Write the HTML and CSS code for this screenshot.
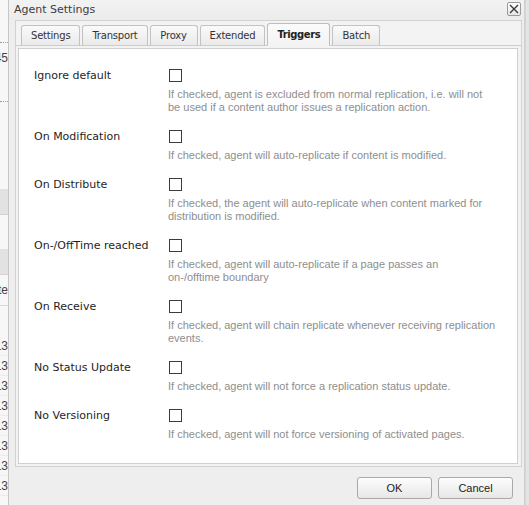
FILE: index.html
```html
<!DOCTYPE html>
<html>

<head>
    <title>Agent Settings</title>
    <link rel="stylesheet" href="styles.css">
</head>

<body>
    <div class="screen">
        <!-- the page underneath the dialog, only its right edge shows -->
        <div class="behind">
            <div class="behind-top"></div>
            <div class="behind-row dotted"><span>1945</span></div>
            <div class="behind-row"></div>
            <div class="behind-row dotted"></div>
            <div class="behind-gap"></div>
            <div class="behind-band"></div>
            <div class="behind-gap small"></div>
            <div class="behind-band"></div>
            <div class="behind-head"><span>Date</span></div>
            <div class="behind-gap tiny"></div>
            <div class="behind-cell"><span>13</span></div>
            <div class="behind-cell"><span>13</span></div>
            <div class="behind-cell"><span>13</span></div>
            <div class="behind-cell"><span>13</span></div>
            <div class="behind-cell"><span>13</span></div>
            <div class="behind-cell"><span>13</span></div>
            <div class="behind-cell"><span>13</span></div>
            <div class="behind-cell"><span>13</span></div>
        </div>

        <div class="window">
            <div class="titlebar">
                <span class="title">Agent Settings</span>
                <button class="close" type="button">
                    <svg width="10" height="10" viewBox="0 0 10 10">
                        <path d="M1 1L9 9M9 1L1 9" stroke="#3a3a3a" stroke-width="1.4" />
                    </svg>
                </button>
            </div>

            <div class="tabpanel">
                <ul class="tabs">
                    <li class="tab">Settings</li>
                    <li class="tab">Transport</li>
                    <li class="tab">Proxy</li>
                    <li class="tab">Extended</li>
                    <li class="tab active">Triggers</li>
                    <li class="tab">Batch</li>
                </ul>

                <div class="tab-body">
                    <div class="field">
                        <label class="field-label">Ignore default</label>
                        <div class="field-input">
                            <span class="checkbox"></span>
                            <p class="hint">If checked, agent is excluded from normal replication, i.e. will not<br>be used if a content author issues a replication action.</p>
                        </div>
                    </div>

                    <div class="field">
                        <label class="field-label">On Modification</label>
                        <div class="field-input">
                            <span class="checkbox"></span>
                            <p class="hint">If checked, agent will auto-replicate if content is modified.</p>
                        </div>
                    </div>

                    <div class="field">
                        <label class="field-label">On Distribute</label>
                        <div class="field-input">
                            <span class="checkbox"></span>
                            <p class="hint">If checked, the agent will auto-replicate when content marked for<br>distribution is modified.</p>
                        </div>
                    </div>

                    <div class="field">
                        <label class="field-label">On-/OffTime reached</label>
                        <div class="field-input">
                            <span class="checkbox"></span>
                            <p class="hint">If checked, agent will auto-replicate if a page passes an<br>on-/offtime boundary</p>
                        </div>
                    </div>

                    <div class="field">
                        <label class="field-label">On Receive</label>
                        <div class="field-input">
                            <span class="checkbox"></span>
                            <p class="hint">If checked, agent will chain replicate whenever receiving replication<br>events.</p>
                        </div>
                    </div>

                    <div class="field">
                        <label class="field-label">No Status Update</label>
                        <div class="field-input">
                            <span class="checkbox"></span>
                            <p class="hint">If checked, agent will not force a replication status update.</p>
                        </div>
                    </div>

                    <div class="field">
                        <label class="field-label">No Versioning</label>
                        <div class="field-input">
                            <span class="checkbox"></span>
                            <p class="hint">If checked, agent will not force versioning of activated pages.</p>
                        </div>
                    </div>
                </div>
            </div>

            <div class="buttons">
                <button class="btn" type="button">OK</button>
                <button class="btn" type="button">Cancel</button>
            </div>
        </div>

        <div class="behind-right"></div>
    </div>
</body>

</html>
```

FILE: styles.css
```css
body {
    margin: 0;
    background-color: #f4f4f4;
    font-family: "DejaVu Sans", sans-serif;
    font-size: 11px;
    color: #222;
}

.screen {
    display: flex;
    width: 529px;
    height: 505px;
    overflow: hidden;
}

/* page behind the window */
.behind {
    width: 8px;
    flex-shrink: 0;
    display: flex;
    flex-direction: column;
    background-color: #f7f7f7;
    font-family: "Liberation Sans", sans-serif;
    font-size: 12px;
    color: #444;
    overflow: hidden;
}

.behind-top {
    height: 42px;
}

.behind-row,
.behind-head,
.behind-cell {
    display: flex;
    justify-content: flex-end;
    align-items: center;
    white-space: nowrap;
}

.behind-row {
    height: 29px;
}

.behind-row.dotted {
    border-top: 1px dotted #999;
}

.behind-gap {
    height: 58px;
}

.behind-gap.small {
    height: 34px;
}

.behind-gap.tiny {
    height: 30px;
}

.behind-band {
    height: 25px;
    background-color: #e2e2e2;
    border-bottom: 1px solid #d2d2d2;
}

.behind-head {
    height: 30px;
    border-bottom: 1px solid #d8d8d8;
}

.behind-cell {
    height: 19px;
    border-bottom: 1px solid #ececec;
}

.behind-right {
    flex: 1;
    background-color: #e4e4e4;
    border-left: 1px solid #d6d6d6;
}

/* dialog window */
.window {
    width: 515px;
    flex-shrink: 0;
    display: flex;
    flex-direction: column;
    background-color: #eeeeee;
    border-left: 1px solid #c6c6c6;
    border-right: 1px solid #cfcfcf;
}

.titlebar {
    height: 20px;
    display: flex;
    align-items: center;
    justify-content: space-between;
    padding: 0 3px 0 5px;
    background: linear-gradient(#f2f2f2, #ececec);
}

.title {
    font-size: 11px;
    color: #3c3c3c;
    margin-top: -2px;
}

.close {
    width: 14px;
    height: 14px;
    padding: 0;
    display: flex;
    align-items: center;
    justify-content: center;
    border: 1px solid #9a9a9a;
    border-radius: 2px;
    background: linear-gradient(#ffffff, #e6e6e6);
    margin-top: -2px;
}

.tabpanel {
    margin: 0 2px 0 6px;
    border: 1px solid #d2d2d2;
    background-color: #f3f3f3;
    padding: 0 3px 2px 2px;
}

.tabs {
    list-style: none;
    margin: 0 -3px 0 -2px;
    padding: 3px 0 0 5px;
    height: 21px;
    display: flex;
    align-items: flex-end;
    border-bottom: 1px solid #cdcdcd;
}

.tab {
    min-width: 28px;
    height: 19px;
    line-height: 19px;
    padding: 0 9px;
    margin-right: 2px;
    margin-bottom: -1px;
    text-align: center;
    font-size: 10px;
    letter-spacing: -0.2px;
    color: #333;
    border: 1px solid #c2c2c2;
    border-bottom: 1px solid #cdcdcd;
    border-radius: 3px 3px 0 0;
    background: linear-gradient(#fafafa, #eaeaea);
}

.tab.active {
    height: 21px;
    line-height: 21px;
    font-weight: bold;
    letter-spacing: -0.4px;
    color: #222;
    border-color: #bdbdbd;
    border-bottom-color: #f3f3f3;
    background: linear-gradient(#fbfbfb, #f3f3f3);
}

.tab-body {
    margin-top: 2px;
    height: 394px;
    padding: 20px 0 0 15px;
    background-color: #fff;
    border: 1px solid #cfcfcf;
}

.field {
    display: flex;
    margin-bottom: 16px;
}

.field-label {
    width: 134px;
    flex-shrink: 0;
    line-height: 13px;
    color: #1e1e1e;
}

.field-input {
    display: flex;
    flex-direction: column;
    align-items: flex-start;
}

.checkbox {
    width: 11px;
    height: 11px;
    margin-left: 1px;
    border: 1px solid #3b3b3b;
    background-color: #fff;
}

.hint {
    margin: 6px 0 0;
    font-family: "Liberation Sans", sans-serif;
    font-size: 11px;
    line-height: 13px;
    color: #8e8e8e;
    white-space: nowrap;
}

.buttons {
    display: flex;
    justify-content: flex-end;
    gap: 6px;
    padding: 10px 11px 0 0;
}

.btn {
    width: 75px;
    height: 22px;
    padding: 0;
    font-family: "Liberation Sans", sans-serif;
    font-size: 11px;
    color: #222;
    border: 1px solid #a9a9a9;
    border-radius: 3px;
    background: linear-gradient(#fdfdfd, #e7e7e7);
}
```
